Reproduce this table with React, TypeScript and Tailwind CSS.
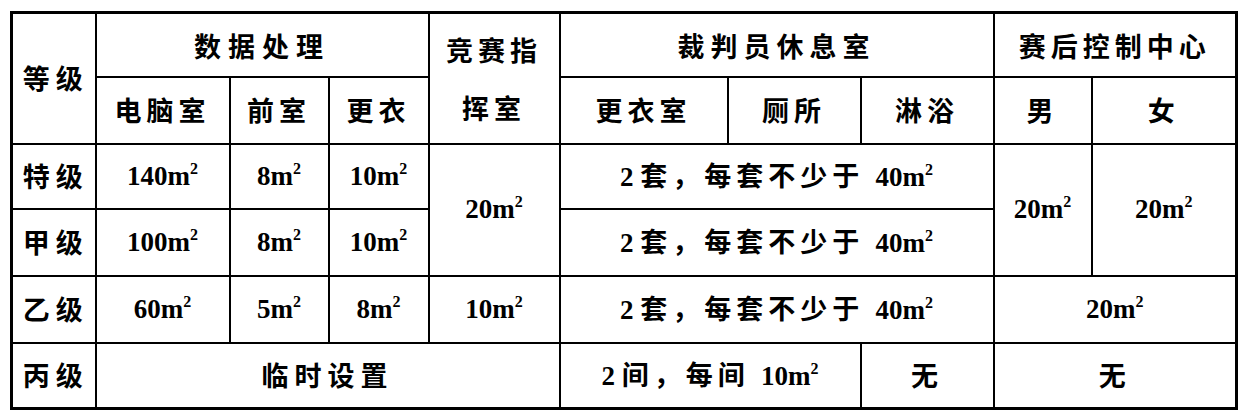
import React from 'react'

const cjk = '"Noto Sans CJK SC", "Noto Sans", sans-serif'
const serif = '"Liberation Serif", "Noto Sans CJK SC", serif'

const Area: React.FC<{ n: string }> = ({ n }) => (
  <span className="font-bold text-[27px] tracking-normal" style={{ fontFamily: serif }}>
    {n}m<sup className="relative -top-[11px] text-[16px] tracking-normal">2</sup>
  </span>
)

const cell = 'border-2 border-black text-center align-middle p-0'
const head = 'font-bold text-[27px] tracking-[5px]'

const Sets = () => (
  <>
    <span className="font-bold tracking-normal" style={{ fontFamily: serif }}>2 </span>套，每套不少于{' '}
    <Area n="40" />
  </>
)

export default function App() {
  return (
    <div className="bg-white w-[1245px] h-[420px] pl-[10px] pt-[11px]" style={{ fontFamily: cjk }}>
      <table className="table-fixed border-collapse border-[3px] border-black w-[1225px] text-black">
        <colgroup>
          <col className="w-[84px]" />
          <col className="w-[134px]" />
          <col className="w-[99px]" />
          <col className="w-[100px]" />
          <col className="w-[131px]" />
          <col className="w-[168px]" />
          <col className="w-[133px]" />
          <col className="w-[133px]" />
          <col className="w-[98px]" />
          <col className="w-[145px]" />
        </colgroup>
        <tbody>
          <tr className="h-[64px]">
            <td rowSpan={2} className={`${cell} ${head} tracking-[6px] pl-[4px]`}>等级</td>
            <td colSpan={3} className={`${cell} ${head} tracking-[7px] pt-[3px]`}>数据处理</td>
            <td rowSpan={2} className={`${cell} ${head} leading-[58px] pt-[2px]`}>
              竞赛指<br />挥室
            </td>
            <td colSpan={3} className={`${cell} ${head} tracking-[6px] pt-[3px]`}>裁判员休息室</td>
            <td colSpan={2} className={`${cell} ${head} tracking-[3px] pt-[3px]`}>赛后控制中心</td>
          </tr>
          <tr className="h-[67px]">
            <td className={`${cell} ${head}`}>电脑室</td>
            <td className={`${cell} ${head}`}>前室</td>
            <td className={`${cell} ${head}`}>更衣</td>
            <td className={`${cell} ${head}`}>更衣室</td>
            <td className={`${cell} ${head}`}>厕所</td>
            <td className={`${cell} ${head}`}>淋浴</td>
            <td className={`${cell} ${head}`}>男</td>
            <td className={`${cell} ${head}`}>女</td>
          </tr>
          <tr className="h-[65px]">
            <td className={`${cell} ${head} tracking-[6px] pl-[4px]`}>特级</td>
            <td className={cell}><Area n="140" /></td>
            <td className={cell}><Area n="8" /></td>
            <td className={cell}><Area n="10" /></td>
            <td rowSpan={2} className={cell}><Area n="20" /></td>
            <td colSpan={3} className={`${cell} ${head} tracking-[2px]`}><Sets /></td>
            <td rowSpan={2} className={cell}><Area n="20" /></td>
            <td rowSpan={2} className={cell}><Area n="20" /></td>
          </tr>
          <tr className="h-[67px]">
            <td className={`${cell} ${head} tracking-[6px] pl-[4px]`}>甲级</td>
            <td className={cell}><Area n="100" /></td>
            <td className={cell}><Area n="8" /></td>
            <td className={cell}><Area n="10" /></td>
            <td colSpan={3} className={`${cell} ${head} tracking-[2px]`}><Sets /></td>
          </tr>
          <tr className="h-[67px]">
            <td className={`${cell} ${head} tracking-[6px] pl-[4px]`}>乙级</td>
            <td className={cell}><Area n="60" /></td>
            <td className={cell}><Area n="5" /></td>
            <td className={cell}><Area n="8" /></td>
            <td className={cell}><Area n="10" /></td>
            <td colSpan={3} className={`${cell} ${head} tracking-[2px]`}><Sets /></td>
            <td colSpan={2} className={cell}><Area n="20" /></td>
          </tr>
          <tr className="h-[66px]">
            <td className={`${cell} ${head} tracking-[6px] pl-[4px]`}>丙级</td>
            <td colSpan={4} className={`${cell} ${head} tracking-[6px]`}>临时设置</td>
            <td colSpan={2} className={`${cell} ${head} tracking-[2px]`}>
              <span className="font-bold tracking-normal" style={{ fontFamily: serif }}>2 </span>间，每间{' '}
              <Area n="10" />
            </td>
            <td className={`${cell} ${head}`}>无</td>
            <td colSpan={2} className={`${cell} ${head}`}>无</td>
          </tr>
        </tbody>
      </table>
    </div>
  )
}
